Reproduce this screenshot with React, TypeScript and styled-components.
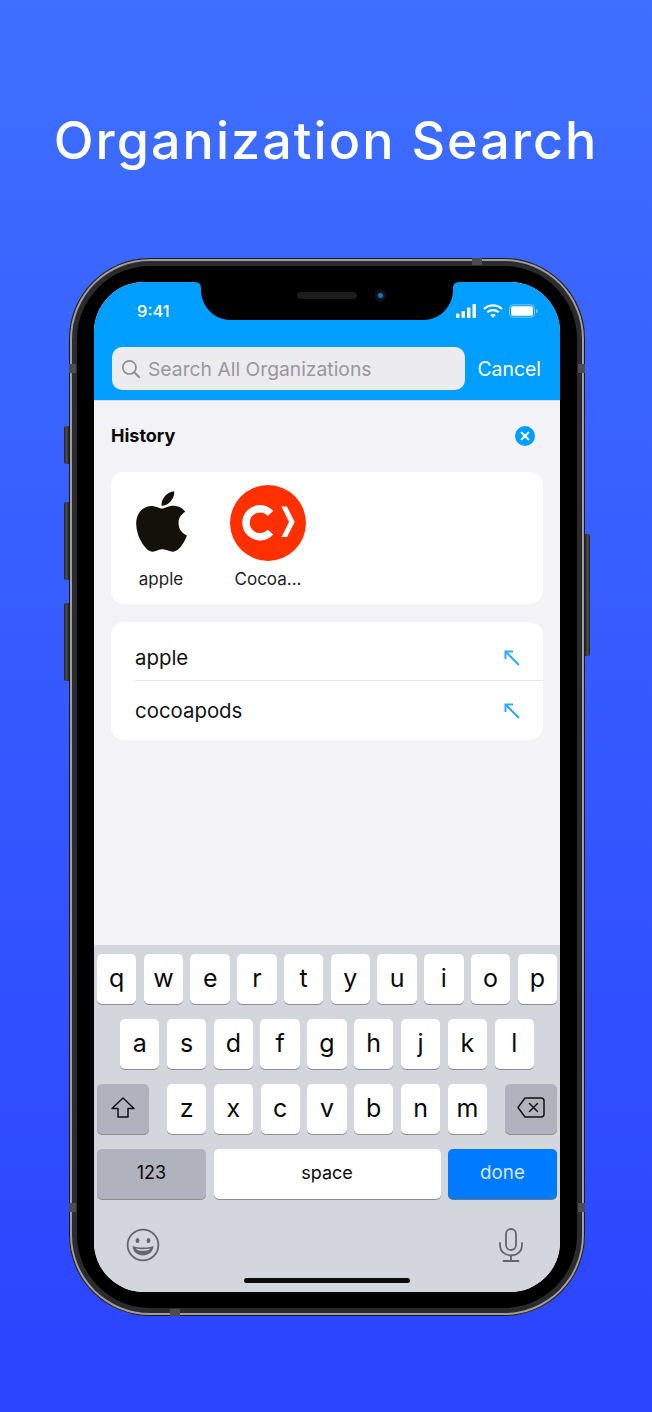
import React from "react";
import styled, { createGlobalStyle } from "styled-components";
import { FaApple } from "react-icons/fa";

const GlobalStyle = createGlobalStyle`
  html, body {
    margin: 0;
    padding: 0;
    background: #2d46ff;
  }
  * {
    box-sizing: border-box;
  }
`;

const sans = `Inter, "Liberation Sans", sans-serif`;

const Stage = styled.div`
  width: 652px;
  height: 1412px;
  overflow: hidden;
  display: flex;
  flex-direction: column;
  align-items: center;
  background: linear-gradient(180deg, #3e6fff 0%, #2b44ff 100%);
  font-family: ${sans};
`;

const Heading = styled.h1`
  margin: 111px 0 87px;
  height: 60px;
  font-size: 52px;
  line-height: 60px;
  letter-spacing: 2.05px;
  font-weight: 500;
  color: #fff;
  white-space: nowrap;
`;

const Phone = styled.div`
  position: relative;
  width: 516px;
  height: 1058px;
  flex: none;
  margin-left: 2px;
  padding: 24px 25px;
  border-radius: 81px;
  background: #000;
  box-shadow:
    inset 0 0 0 1px #1a1a1c,
    inset 0 0 0 3px #9d9da1,
    inset 0 0 0 8px #2b2b2d;
`;

const SideButton = styled.div<{ $side: "left" | "right"; $top: number; $height: number }>`
  position: absolute;
  top: ${(p) => p.$top}px;
  ${(p) => p.$side}: -5px;
  width: 5px;
  height: ${(p) => p.$height}px;
  border-radius: ${(p) => (p.$side === "left" ? "2px 0 0 2px" : "0 2px 2px 0")};
  background: linear-gradient(90deg, #222 0%, #4c4c50 50%, #222 100%);
`;

const Band = styled.div<{ $top: number; $left: number; $wide?: boolean }>`
  position: absolute;
  top: ${(p) => p.$top}px;
  left: ${(p) => p.$left}px;
  width: ${(p) => (p.$wide ? 10 : 7)}px;
  height: ${(p) => (p.$wide ? 7 : 9)}px;
  background: #4d4d50;
`;

const Screen = styled.div`
  position: relative;
  width: 466px;
  height: 1010px;
  border-radius: 50px;
  overflow: hidden;
  display: flex;
  flex-direction: column;
  background: #f2f2f7;
`;

const NotchShape = styled.svg`
  position: absolute;
  top: 0;
  left: 100px;
`;

const Speaker = styled.div`
  position: absolute;
  top: 10px;
  left: 203px;
  width: 60px;
  height: 7px;
  border-radius: 4px;
  background: #1c1c1e;
`;

const Camera = styled.div`
  position: absolute;
  top: 7px;
  left: 280px;
  width: 13px;
  height: 13px;
  border-radius: 50%;
  background: radial-gradient(circle, #1d6fb8 0 2px, #0b1a2c 3px, #0a0a10 6px);
`;

const NavBar = styled.div`
  height: 118px;
  flex: none;
  background: #009eff;
  display: flex;
  flex-direction: column;
`;

const StatusBar = styled.div`
  height: 65px;
  display: flex;
  justify-content: space-between;
  align-items: flex-start;
  padding: 19px 22px 0 43px;
  color: #fff;
`;

const Clock = styled.span`
  font-size: 16.5px;
  line-height: 20px;
  font-weight: 500;
`;

const StatusIcons = styled.div`
  display: flex;
  align-items: center;
  gap: 6px;
  height: 20px;
  margin-left: auto;
`;

const SearchRow = styled.div`
  display: flex;
  align-items: center;
  padding: 0 19px 0 18px;
`;

const SearchField = styled.div`
  width: 353px;
  height: 43px;
  border-radius: 10px;
  background: #ececee;
  display: flex;
  align-items: center;
  gap: 7px;
  padding-left: 9px;
  color: #8e8e93;
`;

const Placeholder = styled.span`
  font-size: 19.3px;
  color: #98989c;
  white-space: nowrap;
`;

const CancelLabel = styled.span`
  margin-left: auto;
  font-size: 19.4px;
  color: #fff;
`;

const Content = styled.div`
  flex: 1;
  border-top: 1px solid #d9d9dd;
  padding: 0 17px;
`;

const SectionHeader = styled.div`
  height: 71px;
  margin-top: -1px;
  display: flex;
  align-items: center;
  justify-content: space-between;
  padding-right: 8px;
`;

const SectionTitle = styled.span`
  font-size: 18px;
  font-weight: 700;
  color: #0a0a0a;
`;

const Card = styled.div`
  background: #fff;
  border-radius: 13px;
`;

const OrgCard = styled(Card)`
  height: 132px;
  margin-top: 1px;
  margin-bottom: 18px;
  padding: 13px 12px;
  display: flex;
  gap: 31px;
`;

const OrgItem = styled.div`
  width: 76px;
  display: flex;
  flex-direction: column;
  align-items: center;
`;

const OrgLogo = styled.div`
  width: 76px;
  height: 76px;
  display: flex;
  align-items: center;
  justify-content: center;
  color: #14110b;
`;

const AppleMark = styled(FaApple)`
  width: 69px;
  height: 69px;
  margin-top: -3px;
`;

const OrgName = styled.span`
  margin-top: 8px;
  font-size: 17px;
  line-height: 20px;
  color: #1c1c1e;
  white-space: nowrap;
`;

const HistoryList = styled(Card)`
  height: 118px;
`;

const HistoryRow = styled.div`
  height: 59px;
  margin-left: 24px;
  padding-right: 23px;
  display: flex;
  align-items: center;
  justify-content: space-between;
  font-size: 20.4px;
  color: #111;

  &:first-child {
    height: 59px;
    padding-top: 13px;
    border-bottom: 1px solid #e6e6e9;
  }
`;

const Keyboard = styled.div`
  height: 347px;
  flex: none;
  background: #d3d6dd;
  padding: 9px 3px 0;
  position: relative;
  display: flex;
  flex-direction: column;
  gap: 14px;
`;

const KeyRow = styled.div<{ $inset?: number }>`
  height: 51px;
  display: flex;
  justify-content: space-between;
  padding: 0 ${(p) => p.$inset ?? 0}px;
`;

const LetterGroup = styled.div`
  display: flex;
  gap: 7.4px;
`;

const Key = styled.div<{ $tone?: "plain" | "muted" | "primary"; $width?: number; $size?: number }>`
  width: ${(p) => p.$width ?? 39.4}px;
  height: 50px;
  flex: none;
  padding-bottom: 3px;
  border-radius: 5px;
  display: flex;
  align-items: center;
  justify-content: center;
  font-size: ${(p) => p.$size ?? 25}px;
  background: ${(p) => (p.$tone === "muted" ? "#b0b3be" : p.$tone === "primary" ? "#007aff" : "#fff")};
  color: ${(p) => (p.$tone === "primary" ? "#d4e8ff" : "#0a0a0a")};
  box-shadow: 0 1px 0 ${(p) => (p.$tone === "primary" ? "#6f7480" : "#8b8d92")};
`;

const KeyboardFooter = styled.div`
  display: flex;
  justify-content: space-between;
  padding: 14px 33px 0 29px;
  color: #63666c;
`;

const HomeIndicator = styled.div`
  position: absolute;
  left: 150px;
  bottom: 9px;
  width: 166px;
  height: 5px;
  border-radius: 3px;
  background: #0c0c0e;
`;

const SignalIcon = () => (
  <svg width="21" height="14" viewBox="0 0 21 14" fill="#fff">
    <rect x="0" y="9.5" width="3.4" height="4.5" rx="0.8" />
    <rect x="5.5" y="7" width="3.4" height="7" rx="0.8" />
    <rect x="11" y="3.5" width="3.4" height="10.5" rx="0.8" />
    <rect x="16.5" y="0" width="3.4" height="14" rx="0.8" />
  </svg>
);

const WifiIcon = () => (
  <svg width="20" height="14" viewBox="0 0 20 14" fill="none" stroke="#fff" strokeWidth="2.2">
    <path d="M1 5 C6 0.2 14 0.2 19 5" />
    <path d="M4.3 8.2 C7.4 5.4 12.6 5.4 15.7 8.2" />
    <path d="M10 13.8 L7.2 11 C8.8 9.7 11.2 9.7 12.8 11 Z" fill="#fff" stroke="none" />
  </svg>
);

const BatteryIcon = () => (
  <svg width="29" height="14" viewBox="0 0 29 14" fill="none">
    <rect x="0.5" y="0.8" width="25" height="12.4" rx="3.5" stroke="#fff" strokeOpacity="0.45" />
    <rect x="2" y="2.3" width="22" height="9.4" rx="2" fill="#fff" />
    <path d="M27 5 C28 5.4 28.6 6.1 28.6 7 C28.6 7.9 28 8.6 27 9 Z" fill="#fff" fillOpacity="0.5" />
  </svg>
);

const SearchIcon = () => (
  <svg width="20" height="20" viewBox="0 0 20 20" fill="none" stroke="currentColor" strokeWidth="1.7" strokeLinecap="round">
    <circle cx="8.4" cy="8.4" r="6.6" />
    <path d="M13.3 13.3 L18.2 18.2" strokeWidth="2" />
  </svg>
);

const ClearIcon = () => (
  <svg width="20" height="20" viewBox="0 0 20 20">
    <circle cx="10" cy="10" r="10" fill="#009eff" />
    <path d="M6.6 6.6 L13.4 13.4 M13.4 6.6 L6.6 13.4" stroke="#fff" strokeWidth="2" strokeLinecap="round" />
  </svg>
);

const CocoaPodsLogo = () => (
  <svg width="76" height="76" viewBox="0 0 76 76" fill="none">
    <circle cx="38" cy="38" r="38" fill="#ff3000" />
    <path d="M40.5 28.5 A14 14 0 1 0 40.5 47" stroke="#fff" strokeWidth="7.4" />
    <path d="M51.5 21.5 H57 L64.7 37 L57 52 H51.5 L59 37 Z" fill="#fff" />
  </svg>
);

const InsertArrow = () => (
  <svg width="16" height="16" viewBox="0 0 16 16" fill="none" stroke="#2ea8ff" strokeWidth="2">
    <path d="M15 15 L2 2" />
    <path d="M1.5 9 V1.5 H9" />
  </svg>
);

const ShiftIcon = () => (
  <svg width="24" height="21" viewBox="0 0 24 21" fill="none" stroke="#111" strokeWidth="1.5" strokeLinejoin="round">
    <path d="M12 1 L23 11.5 H17 V20 H7 V11.5 H1 Z" />
  </svg>
);

const DeleteIcon = () => (
  <svg width="28" height="21" viewBox="0 0 28 21" fill="none" stroke="#111" strokeWidth="1.5" strokeLinejoin="round" strokeLinecap="round">
    <path d="M8 1 H24 Q27 1 27 4 V17 Q27 20 24 20 H8 L1 10.5 Z" />
    <path d="M12.5 6.5 L20.5 14.5 M20.5 6.5 L12.5 14.5" />
  </svg>
);

const EmojiIcon = () => (
  <svg width="34" height="34" viewBox="0 0 34 34" fill="none">
    <circle cx="17" cy="17" r="15.4" stroke="currentColor" strokeWidth="1.8" />
    <ellipse cx="11.5" cy="12.5" rx="1.9" ry="2.5" fill="currentColor" />
    <ellipse cx="22.5" cy="12.5" rx="1.9" ry="2.5" fill="currentColor" />
    <path d="M6.5 18 C12 20 22 20 27.5 18 C27 24 22.5 27.5 17 27.5 C11.5 27.5 7 24 6.5 18 Z" fill="currentColor" />
    <path d="M9.5 20.5 C14 21.6 20 21.6 24.5 20.5 C23.5 22 20.5 22.8 17 22.8 C13.5 22.8 10.5 22 9.5 20.5 Z" fill="#d3d6dd" />
  </svg>
);

const MicIcon = () => (
  <svg width="26" height="34" viewBox="0 0 26 34" fill="none" stroke="currentColor" strokeWidth="1.8" strokeLinecap="round">
    <rect x="8" y="1" width="10" height="21" rx="5" />
    <path d="M2 15 V17 C2 23.5 7 27.5 13 27.5 C19 27.5 24 23.5 24 17 V15" />
    <path d="M13 27.5 V33 M5.5 33 H20.5" />
  </svg>
);

const rowOne = ["q", "w", "e", "r", "t", "y", "u", "i", "o", "p"];
const rowTwo = ["a", "s", "d", "f", "g", "h", "j", "k", "l"];
const rowThree = ["z", "x", "c", "v", "b", "n", "m"];

export default function App() {
  return (
    <Stage>
      <GlobalStyle />
      <Heading>Organization Search</Heading>
      <Phone>
        <SideButton $side="left" $top={168} $height={38} />
        <SideButton $side="left" $top={244} $height={78} />
        <SideButton $side="left" $top={345} $height={78} />
        <SideButton $side="right" $top={276} $height={122} />
        <Band $top={106} $left={0} />
        <Band $top={106} $left={509} />
        <Band $top={945} $left={0} />
        <Band $top={945} $left={509} />
        <Band $top={0} $left={403} $wide />
        <Band $top={1051} $left={101} $wide />
        <Screen>
          <NavBar>
            <StatusBar>
              <Clock>9:41</Clock>
              <StatusIcons>
                <SignalIcon />
                <WifiIcon />
                <BatteryIcon />
              </StatusIcons>
            </StatusBar>
            <SearchRow>
              <SearchField>
                <SearchIcon />
                <Placeholder>Search All Organizations</Placeholder>
              </SearchField>
              <CancelLabel>Cancel</CancelLabel>
            </SearchRow>
          </NavBar>
          <Content>
            <SectionHeader>
              <SectionTitle>History</SectionTitle>
              <ClearIcon />
            </SectionHeader>
            <OrgCard>
              <OrgItem>
                <OrgLogo>
                  <AppleMark />
                </OrgLogo>
                <OrgName>apple</OrgName>
              </OrgItem>
              <OrgItem>
                <OrgLogo>
                  <CocoaPodsLogo />
                </OrgLogo>
                <OrgName>Cocoa...</OrgName>
              </OrgItem>
            </OrgCard>
            <HistoryList>
              <HistoryRow>
                apple
                <InsertArrow />
              </HistoryRow>
              <HistoryRow>
                cocoapods
                <InsertArrow />
              </HistoryRow>
            </HistoryList>
          </Content>
          <Keyboard>
            <KeyRow>
              {rowOne.map((k) => (
                <Key key={k}>{k}</Key>
              ))}
            </KeyRow>
            <KeyRow $inset={23}>
              {rowTwo.map((k) => (
                <Key key={k}>{k}</Key>
              ))}
            </KeyRow>
            <KeyRow>
              <Key $tone="muted" $width={52}>
                <ShiftIcon />
              </Key>
              <LetterGroup>
                {rowThree.map((k) => (
                  <Key key={k}>{k}</Key>
                ))}
              </LetterGroup>
              <Key $tone="muted" $width={52}>
                <DeleteIcon />
              </Key>
            </KeyRow>
            <KeyRow>
              <Key $tone="muted" $width={109} $size={18}>
                123
              </Key>
              <Key $width={227} $size={18}>
                space
              </Key>
              <Key $tone="primary" $width={109} $size={18.8}>
                done
              </Key>
            </KeyRow>
            <KeyboardFooter>
              <EmojiIcon />
              <MicIcon />
            </KeyboardFooter>
            <HomeIndicator />
          </Keyboard>
          <NotchShape width="266" height="38" viewBox="0 0 266 38">
            <path d="M0 0 H266 C259 0 259 4 259 8 C259 24 246 38 230 38 H36 C20 38 7 24 7 8 C7 4 7 0 0 0 Z" fill="#000" />
          </NotchShape>
          <Speaker />
          <Camera />
        </Screen>
      </Phone>
    </Stage>
  );
}
